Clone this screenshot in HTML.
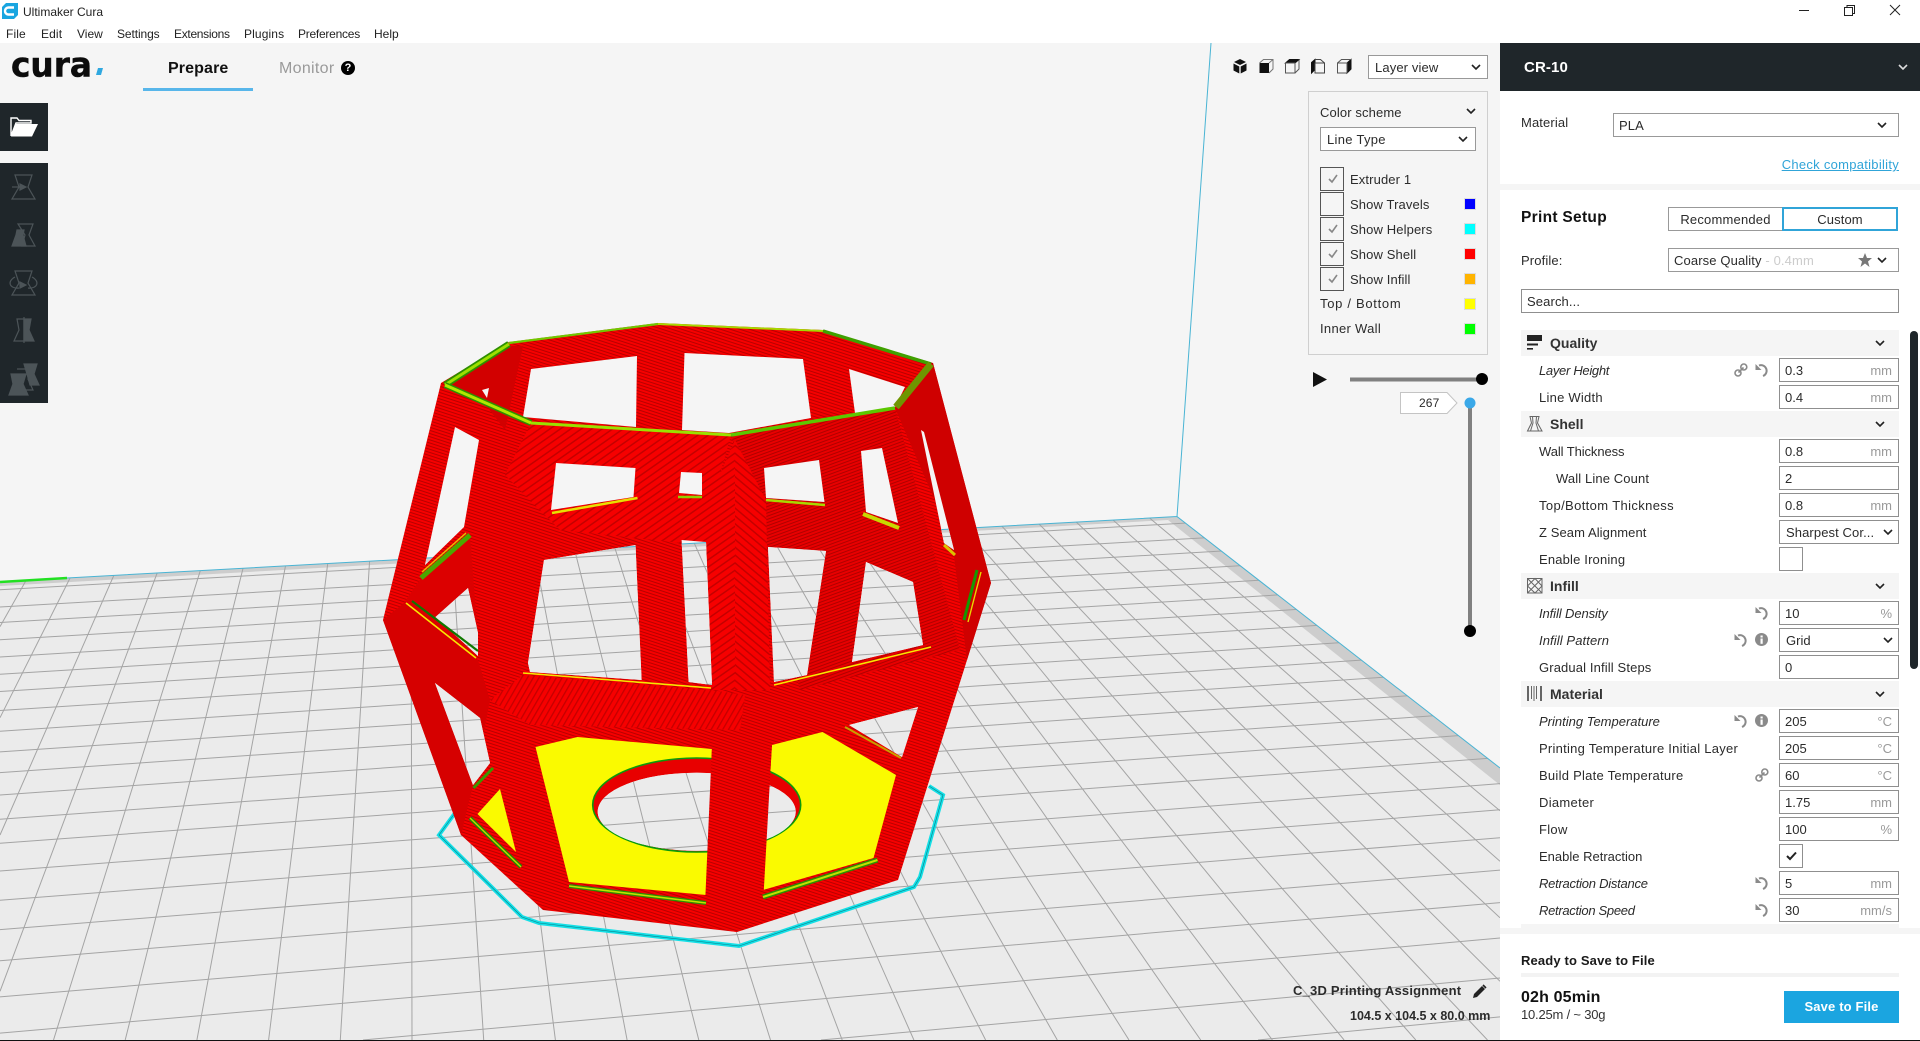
<!DOCTYPE html>
<html lang="en"><head><meta charset="utf-8"><title>Ultimaker Cura</title>
<style>
html,body{margin:0;padding:0;width:1920px;height:1041px;overflow:hidden;background:#fff}
body{font-family:"Liberation Sans",sans-serif;font-size:13px;color:#2b2b2b;position:relative}
.a{position:absolute;box-sizing:border-box}
.t{position:absolute;white-space:nowrap;line-height:24px;height:24px;margin-top:1px;letter-spacing:.12px}
.m{font-size:12px;color:#222;top:21px}
.b{font-weight:bold}
.i{font-style:italic}
.box{position:absolute;box-sizing:border-box;border:1px solid #8f8f8f;background:#fff;height:24px;left:1779px;width:120px}
.u{position:absolute;right:6px;top:1px;line-height:22px;color:#9a9a9a}
.v{position:absolute;left:5px;top:1px;line-height:22px;color:#2b2b2b}
.hd{position:absolute;left:1521px;width:378px;height:26px;background:#f5f5f5}
.hd b{position:absolute;left:29px;top:0;line-height:26px;color:#333;font-size:14px}
svg{position:absolute;overflow:visible}
.cb{position:absolute;box-sizing:border-box;left:1320px;width:24px;height:24px;border:1px solid #555;background:#f5f5f5}
.sw{position:absolute;box-sizing:border-box;left:1464px;width:12px;height:12px;border:1px solid #ddd}
</style></head><body>

<!-- 3D scene -->
<svg style="left:0;top:0;overflow:hidden" width="1500" height="1041" viewBox="0 0 1500 1041">
<defs>
<clipPath id="plateclip"><polygon points="0,582 1177,516.500 1500,768 1500,1040 0,1040"/></clipPath>
<pattern id="h0" width="3" height="3" patternUnits="userSpaceOnUse" patternTransform="rotate(18)"><rect width="3" height="3" fill="#f60000"/><rect width="3" height="1" fill="#b80000"/></pattern>
<pattern id="h1" width="6" height="6" patternUnits="userSpaceOnUse" patternTransform="rotate(-35)"><rect width="6" height="6" fill="#f60000"/><rect width="6" height="1.500" fill="#c40000"/></pattern>
<pattern id="h2" width="3" height="3" patternUnits="userSpaceOnUse" patternTransform="rotate(-20)"><rect width="3" height="3" fill="#e80000"/><rect width="3" height="1" fill="#b00000"/></pattern>
<pattern id="h3" width="6" height="6" patternUnits="userSpaceOnUse" patternTransform="rotate(40)"><rect width="6" height="6" fill="#f60000"/><rect width="6" height="1.500" fill="#c40000"/></pattern>
<pattern id="h4" width="5" height="5" patternUnits="userSpaceOnUse" patternTransform="rotate(-60)"><rect width="5" height="5" fill="#f60000"/><rect width="5" height="1.300" fill="#c40000"/></pattern>
<g id="bg">
<rect x="0" y="43" width="1500" height="997" fill="#f5f5f5"/>
<polygon points="0,582 1177,516.500 1500,768 1500,1040 0,1040" fill="#ebebeb"/>
<polygon points="1177,516.500 1500,768 1500,785 1168,520" fill="#cdcdcd"/>
<polygon points="0,582 1177,516.500 1168,520 0,586" fill="#cdcdcd"/>
<g clip-path="url(#plateclip)" stroke="#a4a4a4" stroke-width="1" fill="none">
<path d="M71.400,500L0,626.600M109.200,500L0,717.700M146.900,500L0,835M184.600,500L0,991.300M222.400,500L53.500,1040M260.100,500L125.200,1040M297.800,500L196.900,1040M335.600,500L268.600,1040M373.300,500L340.300,1040M411,500L412,1040M448.800,500L483.700,1040M486.500,500L555.400,1040M524.300,500L627.100,1040M562,500L698.800,1040M599.700,500L770.500,1040M637.500,500L842.200,1040M675.200,500L913.900,1040M712.900,500L985.600,1040M750.700,500L1057.300,1040M788.400,500L1129,1040M826.100,500L1200.700,1040M863.900,500L1272.400,1040M901.600,500L1344.100,1040M939.400,500L1415.800,1040M977.100,500L1487.500,1040M1014.800,500L1500,981.300M1052.600,500L1500,917.800M1090.300,500L1500,861.300M1128,500L1500,810.800M1165.800,500L1500,765.300"/>
<path d="M0,589.700L1500,505.400M0,607L1500,520.800M0,622.500L1500,534.700M0,639.800L1500,550.200M0,657L1500,565.600M0,674.300L1500,581.100M0,691.500L1500,596.500M0,710.500L1500,613.600M0,731.200L1500,632.100M0,751.900L1500,650.700M0,772.600L1500,669.200M0,795L1500,689.300M0,819.200L1500,710.900M0,843.300L1500,732.500M0,871L1500,757.400M0,900.300L1500,783.600M0,929.600L1500,809.800M0,960.700L1500,837.700M0,996.900L1500,870.100M0,1033.100L1500,902.600M363,1040L1500,938M821,1040L1500,978M1258,1040L1500,1016.900"/>
</g>
<path d="M1211,43L1177,516.500L1500,768M67,578L1177,516.500" stroke="#49b4d4" stroke-width="1" fill="none"/>
<path d="M0,582L67,578" stroke="#22e022" stroke-width="2.500" fill="none"/>
</g>
<clipPath id="holes">
<polygon points="531,369 637,356 636,427 523,417"/>
<polygon points="684.500,353 803,359 811,418 729,433 682,430"/>
<polygon points="849,369 905,387 895,407 855,413"/>
<polygon points="482,390 489,388 487,398"/>
<polygon points="455,427 479,440 464,527 425,565"/>
<polygon points="556,463 635.500,468 633.500,497 551,510"/>
<polygon points="681,472 702,473 702,495 679,493"/>
<polygon points="764,468 819,460 824.500,502 766,498"/>
<polygon points="861,451 882,448 898,523 866,512"/>
<polygon points="921,430 924,432 954,550 944,543"/>
<polygon points="544,560 635.500,545 641.600,680 530,672 528,663"/>
<polygon points="681.600,540 706,542 712,685 688.600,682"/>
<polygon points="768,547 826,551 807,675 774,682"/>
<polygon points="866,562 913,582 923,645 852,662"/>
<polygon points="468,588 478,633 478,656 435.500,617"/>
<polygon points="435,683 480,718 490,763 473,785"/>
<polygon points="849,725 918,707 902,757"/>
<ellipse cx="696.700" cy="811.700" rx="99" ry="39"/>
</clipPath>
</defs>
<use href="#bg"/>
<!-- skirt -->
<path d="M455,813L439,835L522,917L539,923L739,946L914,887L920,877L943,795L929,786" fill="none" stroke="#14dfe6" stroke-width="4"/>
<path d="M455,813L439,835L522,917L539,923L739,946L914,887L920,877L943,795L929,786" fill="none" stroke="#0a7f88" stroke-width=".6"/>
<!-- body -->
<polygon points="441,383 509,342 658,323 823,330 933,363 991,583 967,660 898,880 737,932 543,910 461,835 383,620" fill="url(#h0)"/>
<polygon points="383,620 404,603 478,660 490,700 473,785 461,835" fill="#d60000"/>
<polygon points="404,603 421,578 470,535 478,640 476,658" fill="#dc0000"/>
<polygon points="933,363 991,583 967,660 952,540 895,408" fill="#cf0000"/>
<polygon points="448,385 509,346 523,346 505,430 482,400" fill="#d20000"/>
<polygon points="531,423 731,435 700,545 560,530 505,475" fill="url(#h1)"/>
<polygon points="490,700 523,675 711,690 745,695 740,730 530,725" fill="url(#h4)"/>
<polygon points="731,435 895,408 960,650 800,690 768,560" fill="url(#h2)"/>
<polygon points="735,440 735,690 708,690 700,520" fill="url(#h1)"/>
<polygon points="735,440 735,690 770,690 766,500" fill="url(#h3)"/>
<!-- yellow -->
<polygon points="535.500,747 577.500,737 712,749 706,895 569,882" fill="#fafa00"/>
<polygon points="772,745 822.500,732 896,775 873.500,858 763,890" fill="#fafa00"/>
<polygon points="500,789 516,852 477.500,814" fill="#fafa00"/>
<!-- hole rim -->
<ellipse cx="696.700" cy="805" rx="104" ry="47" fill="#e80000" stroke="#0a9a0a" stroke-width="1.600"/>
<use href="#bg" clip-path="url(#holes)"/>
<!-- column in front of the hole -->
<polygon points="712,745 772,743 763,905 705,905" fill="url(#h0)"/>
<polygon points="705,905 763,900 737,932 690,925" fill="url(#h0)"/>
<!-- top ring -->
<g fill="none" stroke-linejoin="miter">
<path d="M445,385L509,344" stroke="#2d8f00" stroke-width="6.500"/>
<path d="M445,385L509,344" stroke="#9ce000" stroke-width="3"/>
<path d="M445,385L531,423" stroke="#2d8f00" stroke-width="6"/>
<path d="M445,385L531,423" stroke="#b0e800" stroke-width="3"/>
<path d="M509,343L658,324" stroke="#70c800" stroke-width="2.200"/>
<path d="M658,324L823,331" stroke="#a6d800" stroke-width="2"/>
<path d="M823,331L931,364" stroke="#3fa000" stroke-width="3.500"/>
<path d="M931,364L896,407" stroke="#6f9600" stroke-width="7"/>
<path d="M895,408L731,435" stroke="#5cc800" stroke-width="3.500"/>
<path d="M731,435L531,423" stroke="#9ae000" stroke-width="3"/>
</g>
<!-- strips -->
<g fill="none">
<path d="M552,513L637.500,498" stroke="#e8e000" stroke-width="2.500"/>
<path d="M678,497L702,497" stroke="#8ed000" stroke-width="2.500"/>
<path d="M766,500L825,505" stroke="#a8d800" stroke-width="2.500"/>
<path d="M863,514L899,528" stroke="#c8d800" stroke-width="4"/>
<path d="M944,545L955,555" stroke="#dcc000" stroke-width="3"/>
<path d="M964,620L977,570" stroke="#149a00" stroke-width="3"/><path d="M968,622L981,572" stroke="#e8d800" stroke-width="1.400"/>
<path d="M421,578L470,535" stroke="#4ca800" stroke-width="5"/><path d="M422,572L466,533" stroke="#e8c000" stroke-width="1.500"/>
<path d="M406,603L476,658" stroke="#f8e800" stroke-width="1.600"/><path d="M412,601L478,651" stroke="#107800" stroke-width="2.200"/>
<path d="M523,673L711,688" stroke="#f8e800" stroke-width="1.500"/>
<path d="M774,685L931,647" stroke="#f8e800" stroke-width="1.500"/>
<path d="M569,886L706,903" stroke="#2a9000" stroke-width="4"/><path d="M569,886L706,903" stroke="#c0e000" stroke-width="1.600"/>
<path d="M763,897L877.500,860" stroke="#2a9000" stroke-width="5"/><path d="M763,897L877.500,860" stroke="#c0e000" stroke-width="2"/>
<path d="M470,818L521,867" stroke="#1e8a00" stroke-width="4"/><path d="M470,818L521,867" stroke="#c0d800" stroke-width="1.400"/>
<path d="M473.500,788L493,768" stroke="#3a9800" stroke-width="3"/>
<path d="M845,727L901,758" stroke="#c8a000" stroke-width="2"/>
</g>
</svg>

<!-- top chrome -->
<div class="a" style="left:0;top:0;width:1920px;height:43px;background:#fff"></div>
<svg style="left:2px;top:3px" width="16" height="16" viewBox="0 0 16 16"><path d="M4,0H16V12L12,16H0V4Z" fill="#19a5e0"/><path d="M12,4.500H6.500A3.400,3.400 0 0 0 6.500,11.500H12" fill="none" stroke="#fff" stroke-width="2.400"/></svg>
<div class="t" style="left:23px;top:-1px;font-size:12px;color:#222;letter-spacing:0">Ultimaker Cura</div>
<div class="t m" style="left:6px">File</div>
<div class="t m" style="left:41px">Edit</div>
<div class="t m" style="left:77px;letter-spacing:0">View</div>
<div class="t m" style="left:117px;letter-spacing:-.1px">Settings</div>
<div class="t m" style="left:174px;letter-spacing:-.3px">Extensions</div>
<div class="t m" style="left:244px">Plugins</div>
<div class="t m" style="left:298px;letter-spacing:-.25px">Preferences</div>
<div class="t m" style="left:374px;letter-spacing:0">Help</div>
<svg style="left:1790px;top:0" width="120" height="20" fill="none" stroke="#222" stroke-width="1"><path d="M9,10.500H19"/><path d="M54.500,7.500h8v8h-8zM57,7.500V5.500h7.500v8h-2"/><path d="M100,5L110,15M110,5L100,15"/></svg>

<!-- logo -->
<svg style="left:0;top:43px" width="140" height="48"><text x="11" y="33.500" font-family="DejaVu Sans" font-weight="bold" font-size="34" textLength="81" lengthAdjust="spacingAndGlyphs" fill="#0c0c0c" stroke="#0c0c0c" stroke-width=".5">cura</text><path d="M98,25H103L101,32H96Z" fill="#2fa8e0"/></svg>
<div class="t b" style="left:168px;top:56px;font-size:16px;color:#111">Prepare</div>
<div class="a" style="left:143px;top:88px;width:110px;height:3px;background:#58b6ea"></div>
<div class="t" style="left:279px;top:56px;font-size:16px;color:#9a9a9a;letter-spacing:.3px">Monitor</div>
<div class="a" style="left:341px;top:61px;width:14px;height:14px;border-radius:50%;background:#000;color:#fff;font-size:11px;font-weight:bold;text-align:center;line-height:14px">?</div>

<!-- left toolbar -->
<div class="a" style="left:0;top:103px;width:48px;height:48px;background:#1f262a"></div>
<svg style="left:10px;top:116px" width="28" height="22"><path d="M1,20V2H7L9,4.500H21V7H6L1,20" fill="none" stroke="#fff" stroke-width="1.400"/><path d="M6,8H28L22,20.500H1Z" fill="#fff"/></svg>
<div class="a" style="left:0;top:163px;width:48px;height:240px;background:#1f262a"></div>
<svg style="left:0;top:163px" width="48" height="240" fill="none" stroke="#4c5458" stroke-width="1.200">
<path d="M15,12H32L28,24L35,36H12L19,24Z"/><path d="M12,24H24"/><path d="M20,21L26,24L20,27Z" fill="#4c5458"/>
<path d="M18,61H33L29,72L35,83H22L25,72Z"/><path d="M17,67H24L23,72L26,83H12L16,72Z" fill="#4c5458"/>
<path d="M15,108H32L28,120L35,132H12L19,120Z"/><path d="M15,114C7,118 9,126 19,125M32,114C40,118 38,126 28,125"/><path d="M20,119L26,122L20,125Z" fill="#4c5458"/>
<path d="M17,156H24V178H14L19,167Z"/><path d="M24,156H31L29,167L34,178H24Z" fill="#4c5458"/><path d="M24,154V180"/>
<path d="M24,201H37L34,211L39,222H30L27,211Z" fill="#4c5458"/><path d="M17,206H30L28,216L33,227H24"/><path d="M11,211H26L23,221L28,232H9L13,221Z" fill="#4c5458"/>
</svg>

<!-- view icons -->
<svg style="left:1233px;top:59px" width="120" height="16">
<path d="M1,3L7,0L13,3L7,6Z" fill="#111"/><path d="M0.500,4.500L6.300,7.500V14.500L0.500,11.500ZM13.500,4.500L7.700,7.500V14.500L13.500,11.500Z" fill="#111"/>
<g transform="translate(26,0)"><rect x="0.500" y="4" width="9.500" height="10" fill="#111"/><path d="M0.500,4L4.500,0.500H14V10L10,14M10,4L14,0.500" fill="none" stroke="#777"/></g>
<g transform="translate(52,0)"><path d="M0.500,4L4.500,0.500H14L10,4Z" fill="#111" stroke="#111"/><path d="M0.500,4H10V14H0.500ZM10,14L14,10V0.500" fill="none" stroke="#555"/></g>
<g transform="translate(78,0)"><path d="M0.500,3.500L4,0.500V10.500L0.500,14Z" fill="#111" stroke="#111"/><path d="M4,4H13.500V14H4ZM4,0.500H9.500L13.500,4" fill="none" stroke="#444"/></g>
<g transform="translate(104,0)"><path d="M10,4L14,0.500V10L10,14Z" fill="#111" stroke="#111"/><path d="M0.500,4H10V14H0.500ZM0.500,4L4.500,0.500H14" fill="none" stroke="#555"/></g>
</svg>
<div class="a" style="left:1368px;top:55px;width:120px;height:24px;border:1px solid #999;background:#fff"></div>
<div class="t" style="left:1375px;top:55px">Layer view</div>
<svg style="left:1471px;top:64px" width="10" height="7"><path d="M1,1L5,5L9,1" fill="none" stroke="#222" stroke-width="1.600"/></svg>

<!-- legend panel -->
<div class="a" style="left:1308px;top:91px;width:180px;height:264px;border:1px solid #cfcfcf;background:#f5f5f5"></div>
<div class="t" style="left:1320px;top:100px">Color scheme</div>
<svg style="left:1466px;top:108px" width="10" height="7"><path d="M1,1L5,5L9,1" fill="none" stroke="#222" stroke-width="1.600"/></svg>
<div class="a" style="left:1320px;top:127px;width:156px;height:24px;border:1px solid #999;background:#fff"></div>
<div class="t" style="left:1327px;top:127px;letter-spacing:.3px">Line Type</div>
<svg style="left:1458px;top:136px" width="10" height="7"><path d="M1,1L5,5L9,1" fill="none" stroke="#222" stroke-width="1.600"/></svg>
<div class="cb" style="top:167px"><svg style="left:7px;top:6px" width="10" height="10"><path d="M1,5L4,8L9,1" fill="none" stroke="#888" stroke-width="1.600"/></svg></div>
<div class="cb" style="top:192px"></div>
<div class="cb" style="top:217px"><svg style="left:7px;top:6px" width="10" height="10"><path d="M1,5L4,8L9,1" fill="none" stroke="#888" stroke-width="1.600"/></svg></div>
<div class="cb" style="top:242px"><svg style="left:7px;top:6px" width="10" height="10"><path d="M1,5L4,8L9,1" fill="none" stroke="#888" stroke-width="1.600"/></svg></div>
<div class="cb" style="top:267px"><svg style="left:7px;top:6px" width="10" height="10"><path d="M1,5L4,8L9,1" fill="none" stroke="#888" stroke-width="1.600"/></svg></div>
<div class="t" style="left:1350px;top:167px">Extruder 1</div>
<div class="t" style="left:1350px;top:192px">Show Travels</div>
<div class="t" style="left:1350px;top:217px">Show Helpers</div>
<div class="t" style="left:1350px;top:242px">Show Shell</div>
<div class="t" style="left:1350px;top:267px">Show Infill</div>
<div class="t" style="left:1320px;top:291px;letter-spacing:.7px">Top / Bottom</div>
<div class="t" style="left:1320px;top:316px;letter-spacing:.3px">Inner Wall</div>
<div class="sw" style="top:198px;background:#0000ff"></div>
<div class="sw" style="top:223px;background:#00ffff"></div>
<div class="sw" style="top:248px;background:#ff0000"></div>
<div class="sw" style="top:273px;background:#ffb400"></div>
<div class="sw" style="top:298px;background:#ffff00"></div>
<div class="sw" style="top:323px;background:#00ff00"></div>

<!-- sliders -->
<svg style="left:1300px;top:360px" width="200" height="280">
<path d="M13,12V27L27,19.500Z" fill="#111"/>
<rect x="50" y="17.500" width="130" height="4" fill="#808080"/>
<circle cx="182" cy="19" r="6" fill="#000"/>
<rect x="168" y="43" width="4" height="228" fill="#808080"/>
<circle cx="170" cy="43" r="5.500" fill="#3aa8e8"/>
<circle cx="170" cy="271" r="6" fill="#000"/>
<path d="M100.500,32.500H147L157,43L147,53.500H100.500Z" fill="#fff" stroke="#c4c4c4"/>
</svg>
<div class="t" style="left:1419px;top:390px;font-size:12px">267</div>

<!-- bottom info -->
<div class="t b" style="left:1293px;top:978px;font-size:13px;color:#2b2b2b;letter-spacing:.2px">C_3D Printing Assignment</div>
<svg style="left:1472px;top:984px" width="15" height="15"><path d="M1,14L2,10L10,2L13,5L5,13Z" fill="#222"/><path d="M11,1L14,4" stroke="#222" stroke-width="1.600"/></svg>
<div class="t b" style="left:1350px;top:1003px;font-size:12.500px;color:#2b2b2b;letter-spacing:0">104.5 x 104.5 x 80.0 mm</div>

<!-- right panel -->
<div class="a" style="left:1500px;top:43px;width:420px;height:997px;background:#fff"></div>
<div class="a" style="left:1500px;top:43px;width:420px;height:48px;background:#1f262a"></div>
<div class="t b" style="left:1524px;top:55px;font-size:15px;color:#fff">CR-10</div>
<svg style="left:1898px;top:64px" width="10" height="7"><path d="M1,1L5,5L9,1" fill="none" stroke="#ddd" stroke-width="1.600"/></svg>
<div class="t" style="left:1521px;top:110px">Material</div>
<div class="a" style="left:1613px;top:113px;width:286px;height:24px;border:1px solid #999"></div>
<div class="t" style="left:1619px;top:113px">PLA</div>
<svg style="left:1877px;top:122px" width="10" height="7"><path d="M1,1L5,5L9,1" fill="none" stroke="#222" stroke-width="1.600"/></svg>
<div class="t" style="right:21px;top:152px;color:#30a4d8;text-decoration:underline;letter-spacing:.28px">Check compatibility</div>
<div class="a" style="left:1500px;top:184px;width:420px;height:6px;background:#f5f5f5"></div>
<div class="t b" style="left:1521px;top:205px;font-size:15.500px;color:#111;letter-spacing:.3px">Print Setup</div>
<div class="a" style="left:1668px;top:207px;width:115px;height:24px;border:1px solid #999;text-align:center;line-height:23px;letter-spacing:.2px">Recommended</div>
<div class="a" style="left:1782px;top:207px;width:116px;height:24px;border:2px solid #30a4d8;text-align:center;line-height:21px;letter-spacing:.12px">Custom</div>
<div class="t" style="left:1521px;top:248px">Profile:</div>
<div class="a" style="left:1668px;top:248px;width:231px;height:24px;border:1px solid #999"></div>
<div class="t" style="left:1674px;top:248px">Coarse Quality <span style="color:#ccc">- 0.4mm</span></div>
<svg style="left:1858px;top:253px" width="14" height="14"><path d="M7,0L9,5H14L10,8.500L11.500,14L7,10.500L2.500,14L4,8.500L0,5H5Z" fill="#777"/></svg>
<svg style="left:1877px;top:257px" width="10" height="7"><path d="M1,1L5,5L9,1" fill="none" stroke="#222" stroke-width="1.600"/></svg>
<div class="a" style="left:1521px;top:289px;width:378px;height:24px;border:1px solid #8f8f8f"></div>
<div class="t" style="left:1527px;top:289px">Search...</div>

<!-- icon defs -->
<svg width="0" height="0" style="left:0;top:0"><defs>
<g id="rs"><path d="M4,2.500A5.500,5.500 0 1 1 8,13" fill="none" stroke="#8a8a8a" stroke-width="2"/><path d="M0.500,1V7H6.500Z" fill="#8a8a8a"/></g>
<g id="lk" fill="none" stroke="#8a8a8a" stroke-width="1.600"><circle cx="9.800" cy="4" r="3"/><circle cx="4" cy="10" r="3"/><path d="M4.500,9.500L9.500,4.500"/></g>
<g id="in"><circle cx="6.500" cy="6.500" r="6.500" fill="#8a8a8a"/><rect x="5.500" y="5.500" width="2.200" height="5.300" fill="#fff"/><rect x="5.500" y="2.500" width="2.200" height="2" fill="#fff"/></g>
<path id="ch" d="M1,1L5,5L9,1" fill="none" stroke="#222" stroke-width="1.600"/>
</defs></svg>

<!-- section headers -->
<div class="hd" style="top:330px"><b>Quality</b></div>
<svg style="left:1527px;top:335px" width="16" height="16"><rect width="15" height="6" fill="#222"/><rect y="8.500" width="11" height="2" fill="#222"/><rect y="13" width="6" height="1.600" fill="#222"/></svg>
<div class="hd" style="top:411px"><b>Shell</b></div>
<svg style="left:1527px;top:416px" width="16" height="16" fill="none" stroke="#666"><path d="M3,.5H12L10.500,7L15,15H0.500L4.500,7Z"/><path d="M5.500,.5L6,7L3.500,15M9.500,.5L9,7L11.500,15"/></svg>
<div class="hd" style="top:573px"><b>Infill</b></div>
<svg style="left:1527px;top:578px" width="16" height="16" fill="none" stroke="#666"><rect x=".5" y=".5" width="14.500" height="14.500"/><path d="M.5,8L8,.5L15,8L8,15ZM.5,.5L15,15M15,.5L.5,15"/></svg>
<div class="hd" style="top:681px"><b>Material</b></div>
<svg style="left:1527px;top:686px" width="16" height="16" stroke="#666"><path d="M1,0V15" stroke-width="2"/><path d="M4.500,0V13M7,0V15M9.500,0V13"/><path d="M14,0V15" stroke-width="2"/></svg>
<svg style="left:1875px;top:340px" width="10" height="7"><use href="#ch"/></svg>
<svg style="left:1875px;top:421px" width="10" height="7"><use href="#ch"/></svg>
<svg style="left:1875px;top:583px" width="10" height="7"><use href="#ch"/></svg>
<svg style="left:1875px;top:691px" width="10" height="7"><use href="#ch"/></svg>

<!-- rows -->
<div class="t i" style="left:1539px;top:358px;letter-spacing:-.3px">Layer Height</div>
<svg style="left:1734px;top:363px" width="14" height="14"><use href="#lk"/></svg><svg style="left:1755px;top:363px" width="14" height="14"><use href="#rs"/></svg>
<div class="box" style="top:358px"><span class="v">0.3</span><span class="u">mm</span></div>
<div class="t" style="left:1539px;top:385px;letter-spacing:.24px">Line Width</div>
<div class="box" style="top:385px"><span class="v">0.4</span><span class="u">mm</span></div>
<div class="t" style="left:1539px;top:439px;letter-spacing:-.09px">Wall Thickness</div>
<div class="box" style="top:439px"><span class="v">0.8</span><span class="u">mm</span></div>
<div class="t" style="left:1556px;top:466px">Wall Line Count</div>
<div class="box" style="top:466px"><span class="v">2</span></div>
<div class="t" style="left:1539px;top:493px;letter-spacing:.37px">Top/Bottom Thickness</div>
<div class="box" style="top:493px"><span class="v">0.8</span><span class="u">mm</span></div>
<div class="t" style="left:1539px;top:520px;letter-spacing:.08px">Z Seam Alignment</div>
<div class="box" style="top:520px"><span class="v" style="left:6px;letter-spacing:.1px">Sharpest Cor...</span><svg style="left:103px;top:8px" width="10" height="7"><use href="#ch"/></svg></div>
<div class="t" style="left:1539px;top:547px;letter-spacing:.17px">Enable Ironing</div>
<div class="box" style="top:547px;width:24px"></div>
<div class="t i" style="left:1539px;top:601px;letter-spacing:-.1px">Infill Density</div>
<svg style="left:1755px;top:606px" width="14" height="14"><use href="#rs"/></svg>
<div class="box" style="top:601px"><span class="v">10</span><span class="u">%</span></div>
<div class="t i" style="left:1539px;top:628px;letter-spacing:.1px">Infill Pattern</div>
<svg style="left:1734px;top:633px" width="14" height="14"><use href="#rs"/></svg><svg style="left:1755px;top:633px" width="14" height="14"><use href="#in"/></svg>
<div class="box" style="top:628px"><span class="v" style="left:6px">Grid</span><svg style="left:103px;top:8px" width="10" height="7"><use href="#ch"/></svg></div>
<div class="t" style="left:1539px;top:655px;letter-spacing:.13px">Gradual Infill Steps</div>
<div class="box" style="top:655px"><span class="v">0</span></div>
<div class="t i" style="left:1539px;top:709px;letter-spacing:0">Printing Temperature</div>
<svg style="left:1734px;top:714px" width="14" height="14"><use href="#rs"/></svg><svg style="left:1755px;top:714px" width="14" height="14"><use href="#in"/></svg>
<div class="box" style="top:709px"><span class="v">205</span><span class="u">°C</span></div>
<div class="t" style="left:1539px;top:736px;letter-spacing:.25px">Printing Temperature Initial Layer</div>
<div class="box" style="top:736px"><span class="v">205</span><span class="u">°C</span></div>
<div class="t" style="left:1539px;top:763px;letter-spacing:.26px">Build Plate Temperature</div>
<svg style="left:1755px;top:768px" width="14" height="14"><use href="#lk"/></svg>
<div class="box" style="top:763px"><span class="v">60</span><span class="u">°C</span></div>
<div class="t" style="left:1539px;top:790px;letter-spacing:.3px">Diameter</div>
<div class="box" style="top:790px"><span class="v">1.75</span><span class="u">mm</span></div>
<div class="t" style="left:1539px;top:817px;letter-spacing:.3px">Flow</div>
<div class="box" style="top:817px"><span class="v">100</span><span class="u">%</span></div>
<div class="t" style="left:1539px;top:844px;letter-spacing:0">Enable Retraction</div>
<div class="box" style="top:844px;width:24px"><svg style="left:6px;top:6px" width="11" height="10"><path d="M1,5L4,8L10,1.500" fill="none" stroke="#222" stroke-width="2"/></svg></div>
<div class="t i" style="left:1539px;top:871px;letter-spacing:-.25px">Retraction Distance</div>
<svg style="left:1755px;top:876px" width="14" height="14"><use href="#rs"/></svg>
<div class="box" style="top:871px"><span class="v">5</span><span class="u">mm</span></div>
<div class="t i" style="left:1539px;top:898px;letter-spacing:-.3px">Retraction Speed</div>
<svg style="left:1755px;top:903px" width="14" height="14"><use href="#rs"/></svg>
<div class="box" style="top:898px"><span class="v">30</span><span class="u">mm/s</span></div>

<div class="a" style="left:1521px;top:924px;width:378px;height:4px;background:#f5f5f5"></div>
<div class="a" style="left:1500px;top:928px;width:420px;height:6px;background:#f5f5f5"></div>
<div class="a" style="left:1910px;top:331px;width:8px;height:338px;border-radius:4px;background:#1f262a"></div>

<!-- footer -->
<div class="t b" style="left:1521px;top:948px;color:#1a1a1a;letter-spacing:.15px">Ready to Save to File</div>
<div class="a" style="left:1521px;top:973px;width:378px;height:4px;background:#f3f3f3"></div>
<div class="t b" style="left:1521px;top:985px;font-size:16px;color:#111;letter-spacing:.15px">02h 05min</div>
<div class="t" style="left:1521px;top:1002px;color:#333;letter-spacing:-.2px">10.25m / ~ 30g</div>
<div class="a" style="left:1784px;top:991px;width:115px;height:32px;background:#1ba5e0;color:#fff;font-weight:bold;text-align:center;line-height:32px;letter-spacing:.15px">Save to File</div>

<div class="a" style="left:0;top:1040px;width:1920px;height:1px;background:#111"></div>
</body></html>
